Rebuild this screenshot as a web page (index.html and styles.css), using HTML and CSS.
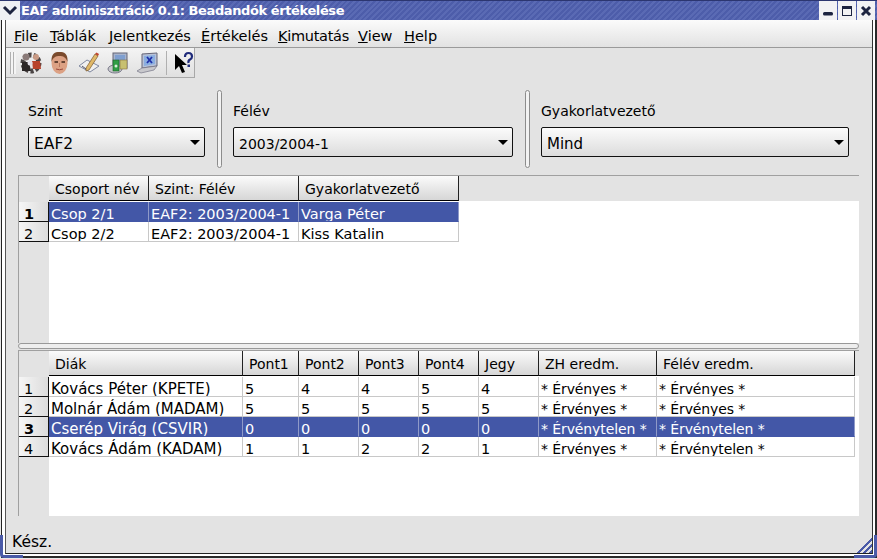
FILE: index.html
```html
<!DOCTYPE html>
<html lang="hu">
<head>
    <meta charset="UTF-8">
    <title>EAF adminisztráció 0.1: Beadandók értékelése</title>
    <link rel="stylesheet" href="styles.css">
</head>
<body>
<div class="window">
    <div class="titlebar">
        <span class="win-menu">
            <svg width="16" height="14" viewBox="0 0 16 14"><path d="M2 3l6 6 6-6" fill="none" stroke="#1c2340" stroke-width="3"/></svg>
        </span>
        <span class="title">EAF adminisztráció 0.1: Beadandók értékelése</span>
        <span class="win-btn"><svg width="12" height="12" viewBox="0 0 12 12"><rect x="1" y="7" width="10" height="3.500" rx="1.500" fill="#1c2340"/></svg></span>
        <span class="win-btn"><svg width="12" height="12" viewBox="0 0 12 12"><rect x="1.500" y="1.500" width="9" height="9" fill="none" stroke="#1c2340"/><rect x="1" y="1" width="10" height="3" fill="#1c2340"/></svg></span>
        <span class="win-btn"><svg width="12" height="12" viewBox="0 0 12 12"><path d="M2 2l8 8M10 2l-8 8" stroke="#1c2340" stroke-width="3"/></svg></span>
    </div>

    <div class="frame">
        <div class="content">
            <div class="menubar">
                <span class="menu-file"><u>F</u>ile</span>
                <span class="menu-tablak"><u>T</u>áblák</span>
                <span class="menu-jel"><u>J</u>elentkezés</span>
                <span><u>É</u>rtékelés</span>
                <span class="menu-kimutatas"><u>K</u>imutatás</span>
                <span class="menu-view"><u>V</u>iew</span>
                <span><u>H</u>elp</span>
            </div>

            <div class="toolbar">
                <span class="grip"></span>
                <svg class="tool" width="22" height="23" viewBox="0 0 22 23">
                    <circle cx="11" cy="12" r="8" fill="none" stroke="#4a4444" stroke-width="5" stroke-dasharray="3 2"/>
                    <circle cx="6" cy="6" r="3.500" fill="#8a7a78"/>
                    <circle cx="16" cy="6" r="3" fill="#c99a84"/>
                    <path d="M12 10h8l1 8h-8z" fill="#b8432c"/>
                    <path d="M2 11h7l2 9H2z" fill="#2b2626"/>
                    <circle cx="10" cy="12" r="2.500" fill="#e4e0e8"/>
                </svg>
                <svg class="tool" width="22" height="24" viewBox="0 0 22 24">
                    <ellipse cx="10.500" cy="12" rx="8" ry="11" fill="#dca184"/>
                    <path d="M2.500 11C2 2 6 1 10.500 1s8.500 1 8 10C17 6 14 5 10.500 5S4 6 2.500 11z" fill="#7a4a2c"/>
                    <path d="M5.500 11h3.500M12.500 11h3.500" stroke="#40261a" stroke-width="1.500"/>
                    <path d="M10.500 12v4" stroke="#b87a60"/>
                    <path d="M7 18q3.500 1.500 7 0" stroke="#9c4a3c" fill="none"/>
                </svg>
                <svg class="tool" width="22" height="22" viewBox="0 0 22 22">
                    <path d="M1 14l8-6 12 6-9 6z" fill="#f0f0f0" stroke="#8088a0"/>
                    <path d="M8 16L17 2l3 2-9 14-3 1z" fill="#e0b868" stroke="#7a5a30" stroke-width=".7"/>
                    <path d="M17 2l3 2 1-2-2.500-1.500z" fill="#c0452e"/>
                    <path d="M4 14l4 3" stroke="#556"/>
                </svg>
                <svg class="tool" width="22" height="22" viewBox="0 0 22 22">
                    <rect x="6" y="1" width="14" height="15" fill="#a8b4cc" stroke="#667"/>
                    <rect x="8" y="3" width="10" height="10" fill="#7f9fd0"/>
                    <ellipse cx="8" cy="17" rx="7" ry="4" fill="#c8c8cc" stroke="#778"/>
                    <rect x="6" y="8" width="6" height="11" fill="#2f9e45" stroke="#1b5e2a" stroke-width=".6"/>
                    <rect x="13" y="8" width="7" height="9" fill="#c8c070" stroke="#887040" stroke-width=".6"/>
                    <circle cx="9" cy="14" r="1.500" fill="#d8f0d8"/>
                </svg>
                <svg class="tool" width="22" height="22" viewBox="0 0 22 22">
                    <path d="M6 2l15-1v13L6 16z" fill="#b8c2d8" stroke="#667"/>
                    <path d="M8 4l11-1v9L8 14z" fill="#8aaee0"/>
                    <path d="M1 19l5-3 15-2-3 4-13 3z" fill="#c8c8cc" stroke="#778" stroke-width=".7"/>
                    <path d="M11 5l5 6M16 5l-5 6" stroke="#1f2fa8" stroke-width="1.800"/>
                </svg>
                <span class="tool-sep"></span>
                <svg class="tool" width="20" height="24" viewBox="0 0 20 24">
                    <path d="M1 3v16l4-4 3 7 3-1-3-7h5z" fill="#000"/>
                    <path d="M11 6q0-4 3.500-4T18 5.500q0 2-2 3t-1.500 3.500" fill="none" stroke="#1f2a7a" stroke-width="2.200"/>
                    <rect x="13.500" y="13.500" width="2.500" height="2.500" fill="#1f2a7a"/>
                </svg>
            </div>

            <div class="filters">
                <div class="filter filter-szint">
                    <label>Szint</label>
                    <div class="combo"><span>EAF2</span><i class="arrow"></i></div>
                </div>
                <div class="splitter-v"></div>
                <div class="filter filter-felev">
                    <label>Félév</label>
                    <div class="combo"><span>2003/2004-1</span><i class="arrow"></i></div>
                </div>
                <div class="splitter-v"></div>
                <div class="filter filter-gyak">
                    <label>Gyakorlatvezető</label>
                    <div class="combo"><span>Mind</span><i class="arrow"></i></div>
                </div>
            </div>

            <div class="grid grid-groups">
                <div class="row head">
                    <div class="corner"></div>
                    <div class="hcell">Csoport név</div>
                    <div class="hcell">Szint: Félév</div>
                    <div class="hcell">Gyakorlatvezető</div>
                </div>
                <div class="row selected">
                    <div class="num">1</div>
                    <div class="cell">Csop 2/1</div>
                    <div class="cell">EAF2: 2003/2004-1</div>
                    <div class="cell">Varga Péter</div>
                </div>
                <div class="row">
                    <div class="num">2</div>
                    <div class="cell">Csop 2/2</div>
                    <div class="cell">EAF2: 2003/2004-1</div>
                    <div class="cell">Kiss Katalin</div>
                </div>
            </div>

            <div class="splitter-h"></div>

            <div class="grid grid-students">
                <div class="row head">
                    <div class="corner"></div>
                    <div class="hcell">Diák</div>
                    <div class="hcell">Pont1</div>
                    <div class="hcell">Pont2</div>
                    <div class="hcell">Pont3</div>
                    <div class="hcell">Pont4</div>
                    <div class="hcell">Jegy</div>
                    <div class="hcell">ZH eredm.</div>
                    <div class="hcell">Félév eredm.</div>
                </div>
                <div class="row">
                    <div class="num">1</div>
                    <div class="cell">Kovács Péter (KPETE)</div>
                    <div class="cell">5</div><div class="cell">4</div><div class="cell">4</div><div class="cell">5</div><div class="cell">4</div>
                    <div class="cell">* Érvényes *</div>
                    <div class="cell">* Érvényes *</div>
                </div>
                <div class="row">
                    <div class="num">2</div>
                    <div class="cell">Molnár Ádám (MADAM)</div>
                    <div class="cell">5</div><div class="cell">5</div><div class="cell">5</div><div class="cell">5</div><div class="cell">5</div>
                    <div class="cell">* Érvényes *</div>
                    <div class="cell">* Érvényes *</div>
                </div>
                <div class="row selected">
                    <div class="num">3</div>
                    <div class="cell">Cserép Virág (CSVIR)</div>
                    <div class="cell">0</div><div class="cell">0</div><div class="cell">0</div><div class="cell">0</div><div class="cell">0</div>
                    <div class="cell">* Érvénytelen *</div>
                    <div class="cell">* Érvénytelen *</div>
                </div>
                <div class="row">
                    <div class="num">4</div>
                    <div class="cell">Kovács Ádám (KADAM)</div>
                    <div class="cell">1</div><div class="cell">1</div><div class="cell">2</div><div class="cell">2</div><div class="cell">1</div>
                    <div class="cell">* Érvényes *</div>
                    <div class="cell">* Érvénytelen *</div>
                </div>
            </div>

            <div class="statusbar">Kész.</div>
        </div>
    </div>
    <span class="frame-corner frame-corner-left"></span>
    <span class="frame-corner frame-corner-right"></span>
    <span class="hatch"></span>
</div>
</body>
</html>
```

FILE: styles.css
```css
html, body {
    margin: 0;
    height: 100%;
    overflow: hidden;
}
body {
    font-family: "DejaVu Sans", sans-serif;
    font-size: 14px;
    color: #000;
    background: #fff;
}
.window {
    position: relative;
    width: 877px;
    height: 559px;
    display: flex;
    flex-direction: column;
    background: #e8e8e8;
}

/* window decoration */
.titlebar {
    height: 20px;
    display: flex;
    align-items: center;
    padding-right: 2px;
    background: repeating-linear-gradient(135deg, #4d5daa 0 2px, #5a6ab4 2px 4px);
    border-top: 1px solid #2c3670;
    box-sizing: border-box;
}
.win-menu {
    width: 20px;
    height: 19px;
    background: #eef0f4;
    display: flex;
    align-items: center;
    justify-content: center;
}
.title {
    flex: 1;
    color: #fff;
    font-weight: bold;
    font-size: 13px;
    letter-spacing: -0.4px;
    padding-left: 1px;
    white-space: nowrap;
}
.win-btn {
    width: 18px;
    height: 19px;
    margin-left: 1px;
    background: #f2f2f4;
    display: flex;
    align-items: center;
    justify-content: center;
}

.frame {
    flex: 1;
    display: flex;
    min-height: 0;
    margin: 0 0 1px 1px;
    padding: 0 2px 2px 3px;
    background: #fff;
    border-left: 1px solid #222;
    border-right: 2px solid #2a2a2a;
    border-bottom: 2px solid #2a2a2a;
}
.content {
    flex: 1;
    min-width: 0;
    display: flex;
    flex-direction: column;
    border-left: 1px solid #555;
    border-right: 1px solid #333;
    border-bottom: 1px solid #222;
    background: #e3e3e3;
}

.menubar {
    height: 28px;
    box-sizing: border-box;
    display: flex;
    align-items: center;
    gap: 10px;
    padding: 4px 0 0 8px;
    font-size: 14.5px;
    background: linear-gradient(#fbfbfb, #e2e2e2);
    border-bottom: 1px solid #9a9a9a;
}
.menu-file { width: 26px; }
.menu-tablak { width: 49px; }
.menu-jel { width: 82px; }
.menu-kimutatas { width: 70px; letter-spacing: -0.3px; }
.menu-view { width: 36px; }

.toolbar {
    width: 189px;
    height: 30px;
    box-sizing: border-box;
    display: flex;
    align-items: center;
    padding-left: 4px;
    background: linear-gradient(#f4f4f4, #e0e0e0);
    border-right: 1px solid #a8a8a8;
    border-bottom: 1px solid #a8a8a8;
}
.grip {
    flex: none;
    width: 6px;
    height: 22px;
    margin-right: 4px;
    background: repeating-linear-gradient(90deg, #b0b0b0 0 1px, #f4f4f4 1px 3px);
}
.tool {
    flex: none;
    margin-right: 7px;
}
.tool-sep {
    flex: none;
    width: 1px;
    height: 24px;
    margin: 0 7px 0 1px;
    background: #b0b0b0;
}

.filters {
    display: flex;
    height: 97px;
    box-sizing: border-box;
    padding: 12px 0 0 22px;
}
.filter {
    display: flex;
    flex-direction: column;
    margin-left: 11px;
}
.filter label {
    height: 37px;
    line-height: 18px;
    padding-top: 12px;
    box-sizing: border-box;
}
.filter-szint { width: 177px; margin-left: 0; }
.filter-felev { width: 280px; }
.filter-gyak { width: 308px; }
.filter-szint .combo span { font-size: 15.5px; }
.filter-gyak .combo span { font-size: 15px; }
.combo {
    width: 100%;
    height: 30px;
    box-sizing: border-box;
    display: flex;
    align-items: center;
    justify-content: space-between;
    padding: 3px 4px 0 5px;
    border: 1px solid #111;
    border-radius: 2px;
    background: linear-gradient(#fbfbfb, #dcdcdc);
}
.arrow {
    width: 0;
    height: 0;
    margin-top: -2px;
    border-left: 5px solid transparent;
    border-right: 5px solid transparent;
    border-top: 5px solid #000;
}
.splitter-v {
    width: 5px;
    height: 78px;
    margin-left: 12px;
    border: 1px solid #8c8c8c;
    border-radius: 3px;
    box-sizing: border-box;
    background: #f2f2f2;
}

.grid {
    margin: 0 13px 0 12px;
    border: 1px solid #a0a0a0;
    border-width: 1px 0 0 1px;
    background: linear-gradient(90deg, #e3e3e3 30px, #fff 30px);
    overflow: hidden;
}
.grid-groups { height: 167px; }
.grid-students { height: 165px; }

.row {
    display: grid;
    height: 20px;
    line-height: 25px;
    font-size: 14.5px;
}
.grid-groups .row { grid-template-columns: 30px 100px 150px 160px; }
.grid-students .row { grid-template-columns: 30px 194px 56px 60px 60px 60px 60px 118px 198px; }
.grid-students .row .cell:nth-child(2) { font-size: 15px; }
.grid-students .row .cell:nth-child(n+8) { font-size: 14px; letter-spacing: -0.1px; }

.row.head {
    height: 25px;
    line-height: 26px;
    font-size: 14px;
    background: #e3e3e3;
}
.grid-groups .row.head { line-height: 27px; }
.hcell {
    padding-left: 6px;
    background: linear-gradient(#fbfbfb, #d6d6d6);
    border-right: 1px solid #222;
    border-bottom: 1px solid #000;
    box-sizing: border-box;
    overflow: hidden;
    white-space: nowrap;
}
.corner {
    background: #e3e3e3;
}
.head + .row {
    margin-top: 1px;
}
.num {
    padding-left: 5px;
    background: linear-gradient(90deg, #f6f6f6, #dcdcdc);
    border-bottom: 1px solid #111;
    border-right: 1px solid #111;
    box-sizing: border-box;
    overflow: hidden;
}
.cell {
    padding-left: 2px;
    height: 20px;
    box-sizing: border-box;
    background: #fff;
    border-right: 1px solid #c8c8c8;
    border-bottom: 1px solid #c8c8c8;
    overflow: hidden;
    white-space: nowrap;
}
.selected .num {
    font-weight: bold;
}
.selected .cell {
    background: #4357a7;
    color: #fff;
    border-bottom-color: #4357a7;
    border-right-color: #8f9ac8;
}

.splitter-h {
    height: 6px;
    margin: 0 13px 1px 12px;
    box-sizing: border-box;
    border: 1px solid #999;
    border-radius: 3px;
    background: #eee;
}

.statusbar {
    flex: 1;
    padding: 17px 0 0 6px;
    line-height: 18px;
    font-size: 15.5px;
}

/* blue resize handles on the window frame */
.frame-corner {
    position: absolute;
    bottom: 1px;
    width: 20px;
    height: 20px;
    border-bottom: 3px solid #4a5aa8;
}
.frame-corner-left {
    left: 0;
    border-left: 3px solid #4a5aa8;
    border-bottom-left-radius: 4px;
}
.frame-corner-right {
    right: 0;
    border-right: 3px solid #4a5aa8;
    border-bottom-right-radius: 4px;
}
.hatch {
    position: absolute;
    right: 5px;
    bottom: 6px;
    width: 16px;
    height: 16px;
    clip-path: polygon(100% 0, 100% 100%, 0 100%);
    background: repeating-linear-gradient(135deg, #4a5aa8 0 2px, #e3e3e3 2px 4px);
}
```
